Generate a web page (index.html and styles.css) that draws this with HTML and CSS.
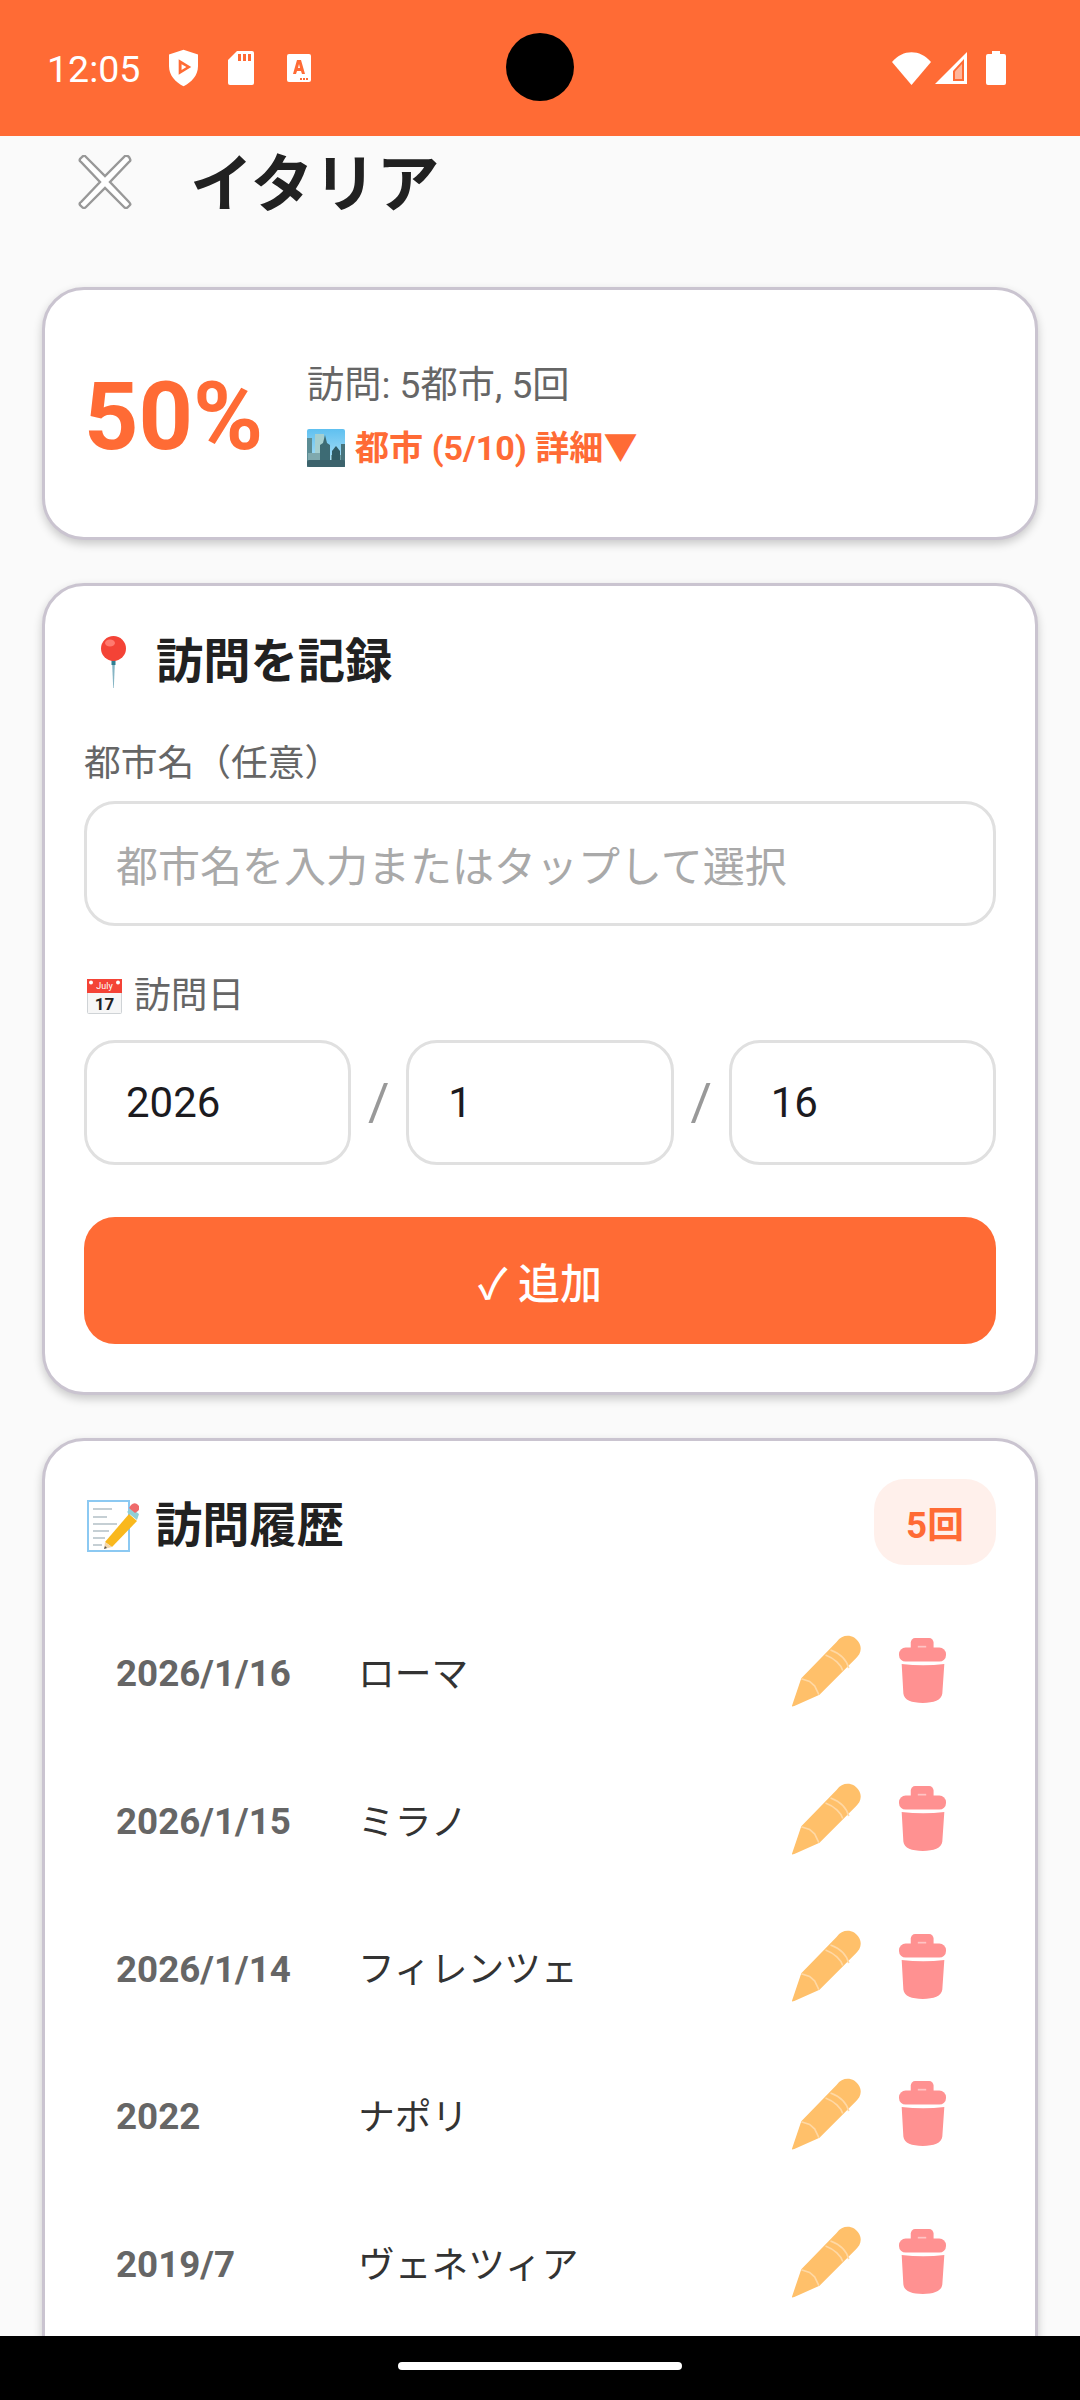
FILE: index.html
```html
<!DOCTYPE html>
<html lang="ja">
<head>
<meta charset="utf-8">
<title>イタリア</title>
<link rel="stylesheet" href="styles.css">
</head>
<body>
<svg class="defs" width="0" height="0" aria-hidden="true">
  <defs>
    <symbol id="pencil" viewBox="95 105 212 217">
      <path d="M97 318 L125 235 L232 125 C250 100 285 102 300 130 C310 150 300 165 290 175 L180 285 L104 319 Q95 322 97 318Z" fill="#ffc06a"/>
      <path d="M125 237 L150 245 L165 258 L178 285 M198 165 C225 175 245 195 250 212 M213 150 C240 160 262 180 268 205" fill="none" stroke="#ffd8a4" stroke-width="5"/>
    </symbol>
    <symbol id="trash" viewBox="417 115 140 193">
      <rect x="452" y="115" width="68" height="45" rx="13" fill="#ff9191"/>
      <rect x="473" y="138" width="25" height="8" fill="#ffc4c4"/>
      <rect x="417" y="143" width="140" height="42" rx="20" fill="#ff9191"/>
      <path d="M425 192 Q490 200 552 192 L546 280 C544 300 520 308 488 308 C455 308 432 300 430 280Z" fill="#ff9191"/>
    </symbol>
  </defs>
</svg>

<header class="status">
  <div class="status-left">
    <span class="clock">12:05</span>
    <svg class="ic-shield" viewBox="0 0 30 38"><path d="M15 0 L30 5 V17 C30 27 23 34 15 38 C7 34 0 27 0 17 V5Z" fill="#fff"/><path d="M10 10 L23 18 L10 26Z" fill="#ff6b35"/><path d="M13 15 L18 18 L13 21Z" fill="#fff"/></svg>
    <svg class="ic-sd" viewBox="0 0 26 34"><path d="M9 0 H24 Q26 0 26 2 V32 Q26 34 24 34 H2 Q0 34 0 32 V9Z" fill="#fff"/><path d="M10 3 h3 v7 h-3Z M15 3 h3 v7 h-3Z M20 3 h3 v7 h-3Z" fill="#ff6b35"/></svg>
    <svg class="ic-a" viewBox="0 0 24 28"><rect width="24" height="28" rx="2" fill="#fff"/><path d="M6 20 L10 6 H14 L18 20 H15 L14 17 H10 L9 20Z M11 14 H13 L12 10Z" fill="#ff6b35"/><path d="M13 24 h2 v2 h-2Z M16 24 h2 v2 h-2Z M19 24 h2 v2 h-2Z" fill="#ff6b35"/></svg>
  </div>
  <div class="camera"></div>
  <div class="status-right">
    <svg class="ic-wifi" viewBox="0 0 39 33"><path d="M0 10 C11 -3 28 -3 39 10 L19.5 33Z" fill="#fff"/></svg>
    <svg class="ic-signal" viewBox="0 0 32 32"><path d="M32 0 V32 H0Z" fill="#fff"/><path d="M18 19 L29 7 V29 H18Z" fill="#ff6b35"/><path d="M20 19.5 L27 12 V27 H20Z" fill="#ffb59a"/></svg>
    <svg class="ic-battery" viewBox="0 0 20 34"><path d="M6 0 H14 V3 H18 Q20 3 20 5 V32 Q20 34 18 34 H2 Q0 34 0 32 V5 Q0 3 2 3 H6Z" fill="#fff"/></svg>
  </div>
</header>

<div class="topbar">
  <svg class="ic-close" viewBox="0 0 52 54"><path d="M6 1 L26 21 L46 1 Q48 0 50 2 L51 4 Q52 6 50 7 L31 27 L50 47 Q52 49 51 50 L49 52 Q47 54 45 52 L26 33 L7 52 Q5 54 3 52 L1 50 Q0 48 2 47 L21 27 L2 7 Q0 6 1 4 L3 2 Q5 0 6 1Z" fill="#fff" stroke="#989898" stroke-width="2.4"/></svg>
  <h1 class="page-title">イタリア</h1>
</div>

<main class="content">
  <section class="card summary">
    <div class="percent">50%</div>
    <div class="summary-text">
      <div class="visits">訪問: 5都市, 5回</div>
      <div class="detail">
        <svg class="em-city" viewBox="0 0 38 38">
          <defs><linearGradient id="sky" x1="0" y1="0" x2="0" y2="1"><stop offset="0" stop-color="#5fc0f0"/><stop offset="1" stop-color="#b5e3f7"/></linearGradient></defs>
          <rect width="38" height="38" rx="2" fill="url(#sky)"/>
          <rect x="8" y="5" width="9" height="20" fill="#a5cfd0"/>
          <rect x="0" y="9" width="5" height="29" fill="#5b8c94"/>
          <rect x="1" y="24" width="13" height="14" fill="#7fa9ae"/>
          <path d="M13 38 V16 L16 14 L18 6 L20 14 L23 16 V38Z" fill="#3d6b74"/>
          <rect x="24" y="26" width="14" height="12" fill="#6f9ca1"/>
          <path d="M25 38 V22 L29 17 L33 22 V38Z" fill="#2f5a64"/>
          <rect x="34" y="15" width="4" height="23" fill="#48747c"/>
          <rect y="31" width="38" height="7" rx="2" fill="#3c636c"/>
        </svg>
        <span>都市 (5/10) 詳細▼</span>
      </div>
    </div>
  </section>

  <section class="card form">
    <h2 class="card-title">
      <svg class="em-pin" viewBox="0 0 25 52"><path d="M11 24 H14 L12.8 52 H12.2Z" fill="#86b5c4"/><rect x="10.5" y="23" width="4" height="6" fill="#2f7f92"/><circle cx="12.5" cy="12.5" r="12.5" fill="#f44336"/><ellipse cx="9" cy="7" rx="5" ry="3.5" fill="#ff7a6e"/></svg>
      <span>訪問を記録</span>
    </h2>
    <div class="label label-city">都市名（任意）</div>
    <div class="field placeholder">都市名を入力またはタップして選択</div>
    <div class="label label-date">
      <svg class="em-cal" viewBox="0 0 35 35"><rect x="0.5" y="1" width="34" height="33.5" rx="1" fill="#f6f6f6" stroke="#cfd3d6"/><rect width="35" height="14" fill="#f44336"/><circle cx="4" cy="3.5" r="2" fill="#fff"/><circle cx="31" cy="3.5" r="2" fill="#fff"/><text x="17.5" y="10" class="cal-month">July</text><text x="17.5" y="31" class="cal-day">17</text></svg>
      <span>訪問日</span>
    </div>
    <div class="date-row">
      <div class="field value">2026</div>
      <span class="slash">/</span>
      <div class="field value">1</div>
      <span class="slash">/</span>
      <div class="field value">16</div>
    </div>
    <div class="add-btn">✓ 追加</div>
  </section>

  <section class="card history">
    <div class="history-head">
      <h2 class="card-title history-title">
        <svg class="em-memo" viewBox="0 0 52 52"><rect x="1" y="1" width="41" height="50" fill="#fff" stroke="#8cc9f2" stroke-width="2"/><path d="M6 9 H25 M6 17 H20 M6 24 H30 M6 31 H22 M6 38 H18 M6 45 H15" stroke="#b3c0c6" stroke-width="1.3"/><path d="M18 42 L42 14 L50 21 L25 47Z" fill="#f9b81d"/><path d="M25 47 L18 42 L17 49Z" fill="#f3d6ac"/><path d="M18 46 L17 49 L20 48Z" fill="#555"/><path d="M40 12 L44 8 L52 14 L50 20 Z" fill="#90cfd6"/><path d="M44 5 Q47 2 50 4 L52 6 Q53 9 51 11 L48 13 L42 8Z" fill="#ef6a6a"/></svg>
        <span>訪問履歴</span>
      </h2>
      <div class="badge">5回</div>
    </div>
    <ul class="visit-list">
      <li class="visit"><span class="v-date">2026/1/16</span><span class="v-name">ローマ</span><svg class="i-pencil"><use href="#pencil"/></svg><svg class="i-trash"><use href="#trash"/></svg></li>
      <li class="visit"><span class="v-date">2026/1/15</span><span class="v-name">ミラノ</span><svg class="i-pencil"><use href="#pencil"/></svg><svg class="i-trash"><use href="#trash"/></svg></li>
      <li class="visit"><span class="v-date">2026/1/14</span><span class="v-name">フィレンツェ</span><svg class="i-pencil"><use href="#pencil"/></svg><svg class="i-trash"><use href="#trash"/></svg></li>
      <li class="visit"><span class="v-date">2022</span><span class="v-name">ナポリ</span><svg class="i-pencil"><use href="#pencil"/></svg><svg class="i-trash"><use href="#trash"/></svg></li>
      <li class="visit"><span class="v-date">2019/7</span><span class="v-name">ヴェネツィア</span><svg class="i-pencil"><use href="#pencil"/></svg><svg class="i-trash"><use href="#trash"/></svg></li>
    </ul>
  </section>
</main>

<footer class="navbar"><div class="pill"></div></footer>
</body>
</html>
```

FILE: styles.css
```css
* { box-sizing: border-box; }
html, body { margin: 0; padding: 0; }
body {
  width: 1080px;
  height: 2400px;
  overflow: hidden;
  display: flex;
  flex-direction: column;
  background: #fafafa;
  color: #212121;
  font-family: Roboto, "Noto Sans CJK JP", sans-serif;
  position: relative;
}
.defs { position: absolute; }

.status {
  flex: none;
  height: 136px;
  background: #ff6b35;
  position: relative;
  display: flex;
  align-items: center;
  justify-content: space-between;
  padding: 0 74px 0 47px;
  color: #fff;
}
.status-left { display: flex; align-items: center; }
.clock { font-size: 37.5px; width: 122px; line-height: 44px; margin-top: 2px; }
.status-right { display: flex; align-items: center; }
.ic-shield { width: 29px; height: 38px; }
.ic-sd { width: 26px; height: 34px; margin-left: 30px; }
.ic-a { width: 24px; height: 28px; margin-left: 33px; }
.ic-wifi { width: 39px; height: 33px; }
.ic-signal { width: 32px; height: 32px; margin-left: 4px; }
.ic-battery { width: 20px; height: 34px; margin-left: 19px; }
.camera {
  position: absolute;
  left: 506px;
  top: 33px;
  width: 68px;
  height: 68px;
  border-radius: 50%;
  background: #000;
}

.topbar {
  flex: none;
  height: 92px;
  display: flex;
  align-items: center;
  padding: 0 0 0 78px;
}
.ic-close { width: 54px; height: 54px; }
.page-title {
  margin: 0 0 0 58px;
  padding-top: 6px;
  font-size: 63px;
  line-height: 86px;
  font-weight: 700;
  color: #212121;
}

.content {
  flex: 1;
  min-height: 0;
  overflow: hidden;
  padding: 59px 42px 0;
}
.card {
  background: #fff;
  border: 3px solid #cac4d0;
  border-radius: 42px;
  box-shadow: 0 4px 10px rgba(0, 0, 0, 0.2);
  padding: 0 39px;
  margin-bottom: 43px;
}

.summary {
  height: 253px;
  display: flex;
  align-items: center;
}
.percent {
  width: 223px;
  padding-top: 6px;
  font-size: 95px;
  font-weight: 700;
  color: #ff6b35;
  line-height: 110px;
}
.summary-text { display: flex; flex-direction: column; padding-top: 4px; }
.visits { font-size: 37.2px; line-height: 48px; color: #666; }
.detail {
  display: flex;
  align-items: center;
  margin-top: 17px;
  font-size: 34.1px;
  line-height: 44px;
  font-weight: 700;
  color: #ff6b35;
}
.em-city { width: 38px; height: 38px; margin-right: 10px; }

.form { height: 812px; padding-top: 44px; }
.card-title {
  margin: 0;
  display: flex;
  align-items: center;
  font-size: 47.25px;
  line-height: 64px;
  font-weight: 700;
  color: #212121;
}
.em-pin { width: 25px; height: 52px; margin: 0 30px 0 17px; }
.label {
  font-size: 36.75px;
  line-height: 48px;
  color: #666;
}
.label-city { margin-top: 46px; }
.field {
  height: 125px;
  border: 3px solid #e0e0e0;
  border-radius: 31px;
  background: #fff;
  display: flex;
  align-items: center;
}
.placeholder {
  margin-top: 13px;
  padding-left: 29px;
  font-size: 42px;
  color: #a9a9a9;
}
.label-date {
  margin-top: 46px;
  display: flex;
  align-items: center;
  height: 48px;
}
.em-cal { width: 35px; height: 35px; margin: 0 12px 0 3px; }
.cal-month { font: 400 9px Roboto, sans-serif; fill: #fff; text-anchor: middle; }
.cal-day { font: 700 17px Roboto, sans-serif; fill: #222; text-anchor: middle; }
.date-row {
  margin-top: 20px;
  display: grid;
  grid-template-columns: 1fr 55px 1fr 55px 1fr;
  align-items: center;
}
.value {
  padding-left: 39px;
  font-size: 42px;
  color: #1c1b1f;
}
.slash {
  text-align: center;
  font-size: 52px;
  line-height: 60px;
  color: #999;
}
.add-btn {
  margin-top: 52px;
  height: 127px;
  border-radius: 31px;
  background: #ff6b35;
  color: #fff;
  font-size: 42px;
  font-weight: 500;
  display: flex;
  align-items: center;
  justify-content: center;
}

.history { padding-top: 38px; margin-bottom: 0; height: 1100px; }
.history-head {
  display: flex;
  align-items: center;
  justify-content: space-between;
  height: 86px;
}
.history-title { padding-top: 7px; }
.em-memo { width: 52px; height: 52px; margin: 0 16px 0 3px; }
.badge {
  width: 122px;
  height: 86px;
  border-radius: 31px;
  background: #fff0eb;
  color: #ff6b35;
  font-size: 36.75px;
  font-weight: 700;
  display: flex;
  align-items: center;
  justify-content: center;
}
.visit-list {
  list-style: none;
  margin: 32px 0 0;
  padding: 0;
}
.visit {
  height: 147.7px;
  display: flex;
  align-items: center;
  padding-left: 32px;
}
.v-date {
  width: 242px;
  flex: none;
  padding-top: 6px;
  font-size: 36.75px;
  font-weight: 700;
  color: #666;
}
.v-name {
  flex: 1;
  font-size: 36.75px;
  color: #333;
}
.i-pencil { width: 71px; height: 72px; flex: none; margin-right: 37px; }
.i-trash { width: 47px; height: 65px; flex: none; margin-right: 50px; }

.navbar {
  flex: none;
  height: 64px;
  background: #000;
  display: flex;
  align-items: center;
  justify-content: center;
  position: relative;
}
.pill {
  width: 284px;
  height: 8px;
  border-radius: 4px;
  background: #fff;
  margin-top: -4px;
}
```
